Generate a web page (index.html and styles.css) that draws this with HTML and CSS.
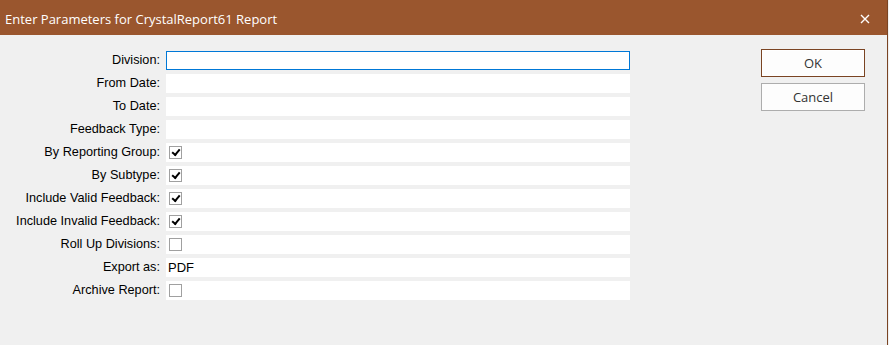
FILE: index.html
```html
<!DOCTYPE html>
<html lang="en">
<head>
  <meta charset="UTF-8" />
  <title>Enter Parameters</title>
  <link rel="stylesheet" href="styles.css">
</head>
<body>
  <div class="window">
    <div class="titlebar">
      <span class="title">Enter Parameters for CrystalReport61 Report</span>
      <span class="close">
        <svg width="10" height="10" viewBox="0 0 10 10"><path d="M1 1 L9 9 M9 1 L1 9" stroke="#fff" stroke-width="1.4" fill="none"/></svg>
      </span>
    </div>
    <div class="content">
      <div class="form">
        <label>Division:</label>
        <div class="field focused"></div>
        <label>From Date:</label>
        <div class="field"></div>
        <label>To Date:</label>
        <div class="field"></div>
        <label>Feedback Type:</label>
        <div class="field"></div>
        <label>By Reporting Group:</label>
        <div class="field"><span class="check on"></span></div>
        <label>By Subtype:</label>
        <div class="field"><span class="check on"></span></div>
        <label>Include Valid Feedback:</label>
        <div class="field"><span class="check on"></span></div>
        <label>Include Invalid Feedback:</label>
        <div class="field"><span class="check on"></span></div>
        <label>Roll Up Divisions:</label>
        <div class="field"><span class="check"></span></div>
        <label>Export as:</label>
        <div class="field text">PDF</div>
        <label>Archive Report:</label>
        <div class="field"><span class="check"></span></div>
      </div>
      <div class="buttons">
        <button class="btn default">OK</button>
        <button class="btn">Cancel</button>
      </div>
    </div>
  </div>
</body>
</html>
```

FILE: styles.css
```css
body {
  margin: 0;
  background: #f0f0f0;
  font-family: 'Liberation Sans', Arial, sans-serif;
  overflow: hidden;
}
.window {
  width: 887px;
  height: 345px;
  background: #f0f0f0;
  border-right: 1px solid #7a4423;
  display: flex;
  flex-direction: column;
}
.titlebar {
  height: 35px;
  background: #9a562e;
  color: #fff;
  display: flex;
  align-items: center;
  justify-content: space-between;
  padding: 0 17px 0 5px;
  font-family: 'Open Sans', 'Noto Sans', sans-serif;
  font-size: 13px;
}
.title {
  margin-top: 2px;
}
.close {
  display: flex;
  margin-top: 2px;
}
.content {
  display: flex;
  padding-top: 16px;
}
.form {
  display: grid;
  grid-template-columns: 160px 464px;
  grid-auto-rows: 19px;
  column-gap: 6px;
  row-gap: 4px;
  font-size: 12.7px;
  color: #000;
}
.form label {
  text-align: right;
  line-height: 19px;
  white-space: nowrap;
}
.field {
  background: #fff;
  display: flex;
  align-items: center;
  padding-left: 3px;
}
.field.focused {
  box-shadow: inset 0 0 0 1px #0078d7;
}
.field.text {
  padding-left: 2px;
  font-size: 13px;
}
.check {
  width: 11px;
  height: 11px;
  border: 1px solid #a0a0a0;
  background: #fff;
  display: flex;
  align-items: center;
  justify-content: center;
}
.check.on::after {
  content: "";
  width: 6px;
  height: 3px;
  border-left: 2px solid #000;
  border-bottom: 2px solid #000;
  transform: rotate(-50deg);
  margin-top: -2px;
}
.buttons {
  margin-left: 131px;
  margin-top: -2px;
  display: flex;
  flex-direction: column;
  gap: 6px;
}
.btn {
  width: 104px;
  height: 28px;
  background: #fdfdfd;
  border: 1px solid #adadad;
  font-family: 'Open Sans', 'Noto Sans', sans-serif;
  font-size: 13px;
  color: #333;
  padding: 0;
}
.btn.default {
  border: 1px solid #7a4423;
  box-shadow: inset 0 0 0 1px #fff;
}
```
